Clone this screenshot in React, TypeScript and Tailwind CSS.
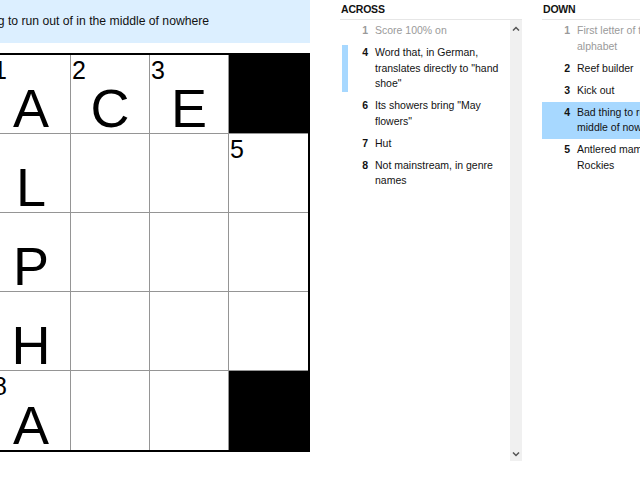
import React from 'react';

type Cell = { letter?: string; num?: string; black?: boolean };

const rows: Cell[][] = [
  [{ letter: 'A', num: '1' }, { letter: 'C', num: '2' }, { letter: 'E', num: '3' }, { black: true }],
  [{ letter: 'L' }, {}, {}, { num: '5' }],
  [{ letter: 'P' }, {}, {}, {}],
  [{ letter: 'H' }, {}, {}, {}],
  [{ letter: 'A', num: '8' }, {}, {}, { black: true }],
];

type Clue = { n: string; text: string; done?: boolean; related?: boolean; active?: boolean };

const across: Clue[] = [
  { n: '1', text: 'Score 100% on', done: true },
  { n: '4', text: 'Word that, in German, translates directly to "hand shoe"', related: true },
  { n: '6', text: 'Its showers bring "May flowers"' },
  { n: '7', text: 'Hut' },
  { n: '8', text: 'Not mainstream, in genre names' },
];

const down: Clue[] = [
  { n: '1', text: 'First letter of the Greek alphabet', done: true },
  { n: '2', text: 'Reef builder' },
  { n: '3', text: 'Kick out' },
  { n: '4', text: 'Bad thing to run out of in the middle of nowhere', active: true },
  { n: '5', text: 'Antlered mammal of the Rockies' },
];

function Chevron({ up }: { up?: boolean }) {
  return (
    <svg width="8" height="5" viewBox="0 0 8 5" fill="none" stroke="#555" strokeWidth="1.5">
      {up ? <polyline points="1,4.5 4,1.5 7,4.5" /> : <polyline points="1,0.5 4,3.5 7,0.5" />}
    </svg>
  );
}

function ClueRow({ c, textW }: { c: Clue; textW: string }) {
  return (
    <li className={`flex py-[3.25px] leading-[15.5px] ${c.active ? 'bg-[#a7d8ff]' : ''} ${c.done ? 'text-[#9a9a9a]' : 'text-[#121212]'}`}>
      <div className={`ml-[2px] w-[6px] shrink-0 ${c.related ? 'bg-[#a7d8ff]' : ''}`} />
      <div className="w-[20px] shrink-0 text-right font-bold">{c.n}</div>
      <div className={`ml-[7px] shrink-0 ${textW}`}>{c.text}</div>
    </li>
  );
}

export default function App() {
  return (
    <div className="flex h-[480px] w-[640px] overflow-hidden bg-white font-['Liberation_Sans',Arial,sans-serif] text-black">
      {/* puzzle side: clue bar runs wider than the grid, both cut at the left edge */}
      <div className="-ml-[57px] w-[367px] shrink-0">
        <div className="flex h-[43px] items-center bg-[#dcefff] pl-[10px] text-[12.2px] text-[#121212]">
          Bad thing to run out of in the middle of nowhere
        </div>
        <div className="ml-[47px] mt-[10px] grid w-[320px] grid-cols-4 border-2 border-black">
          {rows.map((r, ri) =>
            r.map((c, ci) => (
              <div
                key={`${ri}-${ci}`}
                className={`relative flex h-[79px] items-end justify-center ${ci < 3 ? 'border-r border-[#959595]' : ''} ${ri < 4 ? 'border-b border-[#959595]' : ''} ${c.black ? 'bg-black' : 'bg-white'}`}
              >
                {c.num && (
                  <span className="absolute left-[1px] top-[3px] text-[25px] leading-none">{c.num}</span>
                )}
                {c.letter && <span className="text-[54px] leading-[49px]">{c.letter}</span>}
              </div>
            ))
          )}
        </div>
      </div>

      {/* across */}
      <div className="ml-[30px] w-[182px] shrink-0">
        <div className="flex h-[19px] items-center pl-[1px] text-[10.5px] font-bold tracking-[-0.2px] text-[#121212]">
          ACROSS
        </div>
        <div className="flex h-[442px] border-t border-[#e6e6e6]">
          <ul className="w-[170px] text-[10.5px]">
            {across.map((c) => (
              <ClueRow key={c.n} c={c} textW="w-[132px]" />
            ))}
          </ul>
          <div className="flex w-[12px] flex-col items-center justify-between bg-[#f0f0f0] pb-[4px] pt-[6px]">
            <Chevron up />
            <Chevron />
          </div>
        </div>
      </div>

      {/* down */}
      <div className="ml-[20px] w-[220px] shrink-0">
        <div className="flex h-[19px] items-center pl-[1px] text-[10.5px] font-bold tracking-[-0.2px] text-[#121212]">
          DOWN
        </div>
        <ul className="border-t border-[#e6e6e6] text-[10.5px]">
          {down.map((c) => (
            <ClueRow key={c.n} c={c} textW="w-[140px]" />
          ))}
        </ul>
      </div>
    </div>
  );
}
